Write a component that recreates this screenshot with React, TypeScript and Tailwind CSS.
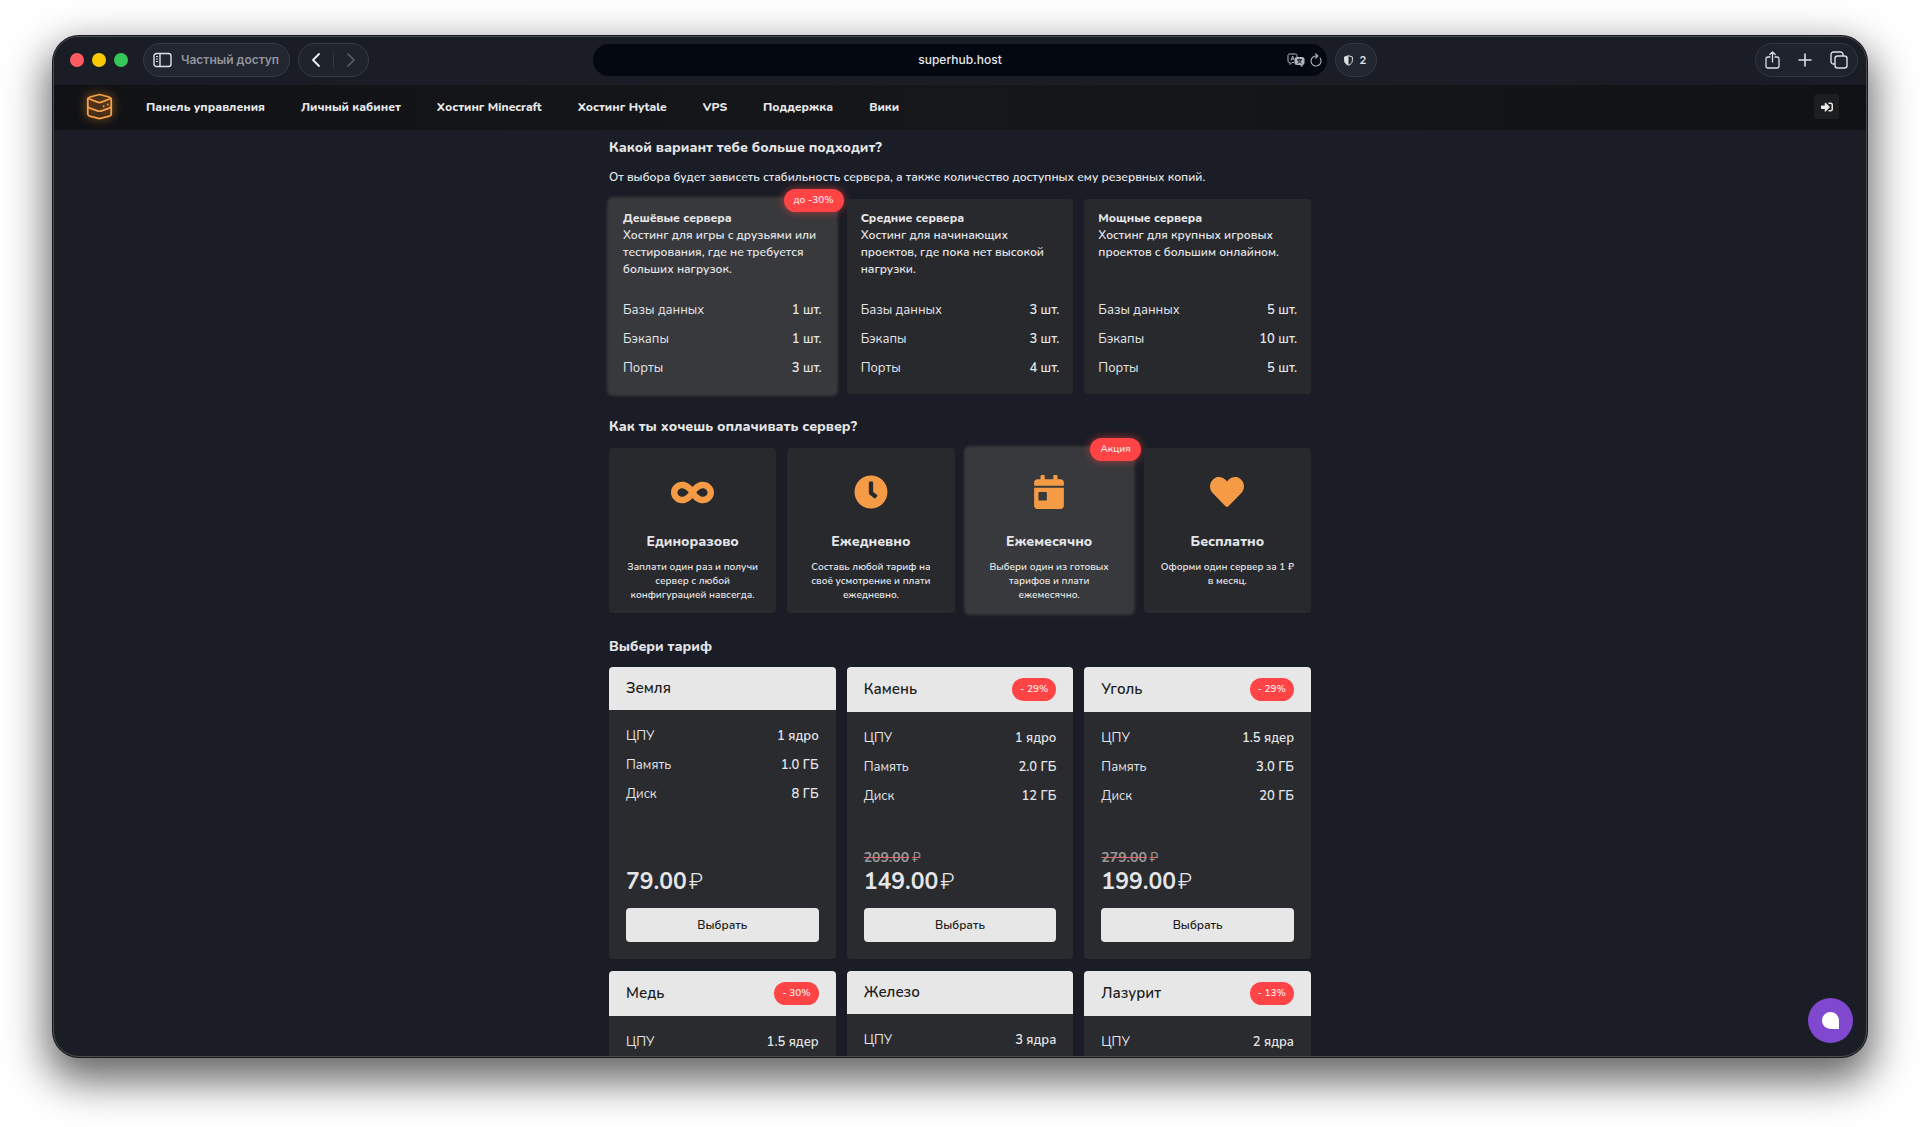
import { FaCalendarDay, FaClock, FaHeart, FaInfinity, FaSignInAlt } from 'react-icons/fa'
import type { IconType } from 'react-icons'

type Spec = [string, string]

const links = ['Панель управления', 'Личный кабинет', 'Хостинг Minecraft', 'Хостинг Hytale', 'VPS', 'Поддержка', 'Вики']

const tiers: { title: string; text: string; specs: Spec[]; badge?: string; active?: boolean }[] = [
  {
    title: 'Дешёвые сервера',
    text: 'Хостинг для игры с друзьями или тестирования, где не требуется больших нагрузок.',
    specs: [['Базы данных', '1 шт.'], ['Бэкапы', '1 шт.'], ['Порты', '3 шт.']],
    badge: 'до -30%',
    active: true,
  },
  {
    title: 'Средние сервера',
    text: 'Хостинг для начинающих проектов, где пока нет высокой нагрузки.',
    specs: [['Базы данных', '3 шт.'], ['Бэкапы', '3 шт.'], ['Порты', '4 шт.']],
  },
  {
    title: 'Мощные сервера',
    text: 'Хостинг для крупных игровых проектов с большим онлайном.',
    specs: [['Базы данных', '5 шт.'], ['Бэкапы', '10 шт.'], ['Порты', '5 шт.']],
  },
]

const payments: { title: string; text: string; icon: IconType; iconSize: string; badge?: string; active?: boolean }[] = [
  {
    title: 'Единоразово',
    text: 'Заплати один раз и получи сервер с любой конфигурацией навсегда.',
    icon: FaInfinity,
    iconSize: 'size-[43px]',
  },
  {
    title: 'Ежедневно',
    text: 'Составь любой тариф на своё усмотрение и плати ежедневно.',
    icon: FaClock,
    iconSize: 'size-[34px]',
  },
  {
    title: 'Ежемесячно',
    text: 'Выбери один из готовых тарифов и плати ежемесячно.',
    icon: FaCalendarDay,
    iconSize: 'size-[34px]',
    badge: 'Акция',
    active: true,
  },
  {
    title: 'Бесплатно',
    text: 'Оформи один сервер за 1 ₽ в месяц.',
    icon: FaHeart,
    iconSize: 'size-[34px]',
  },
]

const plans: { name: string; specs: Spec[]; price?: string; oldPrice?: string; discount?: string }[] = [
  { name: 'Земля', specs: [['ЦПУ', '1 ядро'], ['Память', '1.0 ГБ'], ['Диск', '8 ГБ']], price: '79.00' },
  { name: 'Камень', specs: [['ЦПУ', '1 ядро'], ['Память', '2.0 ГБ'], ['Диск', '12 ГБ']], price: '149.00', oldPrice: '209.00', discount: '- 29%' },
  { name: 'Уголь', specs: [['ЦПУ', '1.5 ядер'], ['Память', '3.0 ГБ'], ['Диск', '20 ГБ']], price: '199.00', oldPrice: '279.00', discount: '- 29%' },
  { name: 'Медь', specs: [['ЦПУ', '1.5 ядер']], discount: '- 30%' },
  { name: 'Железо', specs: [['ЦПУ', '3 ядра']] },
  { name: 'Лазурит', specs: [['ЦПУ', '2 ядра']], discount: '- 13%' },
]

function Toolbar() {
  return (
    <div className="flex h-12 shrink-0 items-center justify-between bg-[#1a1d26] pr-2 pb-[2px] pl-4 font-['Inter',sans-serif]">
      <div className="flex flex-1 items-center">
        <div className="flex gap-2">
          <button aria-label="Закрыть" className="size-[14px] rounded-full bg-[#ff5a61]" />
          <button aria-label="Свернуть" className="size-[14px] rounded-full bg-[#f8c905]" />
          <button aria-label="Развернуть" className="size-[14px] rounded-full bg-[#35c759]" />
        </div>
        <button className="ml-[15px] flex h-[34px] items-center gap-[9px] rounded-full border border-[#383c46] bg-[#222630] pr-[10px] pl-[9px] text-[12px] font-semibold whitespace-nowrap text-[#92949b]">
          <svg className="h-4 w-[19px]" viewBox="0 0 19 16" fill="none" stroke="#dfe1e6" strokeWidth="1.4">
            <rect x="1" y="1.5" width="17" height="13" rx="2.5" />
            <path d="M7 1.5v13" />
            <path d="M3 4.5h2M3 7h2M3 9.5h2" strokeWidth="1" />
          </svg>
          Частный доступ
        </button>
        <div className="ml-2 flex h-[34px] items-center rounded-full border border-[#383c46] bg-[#1f232c] px-3">
          <button aria-label="Назад" className="text-[#f0f1f4]">
            <svg className="h-4 w-[10px]" viewBox="0 0 10 16" fill="none" stroke="currentColor" strokeWidth="1.8" strokeLinecap="round" strokeLinejoin="round">
              <path d="M8 2L2 8l6 6" />
            </svg>
          </button>
          <span className="mx-3 h-[15px] w-px bg-[#343842]" />
          <button aria-label="Вперёд" className="text-[#5a5e68]">
            <svg className="h-4 w-[10px]" viewBox="0 0 10 16" fill="none" stroke="currentColor" strokeWidth="1.6" strokeLinecap="round" strokeLinejoin="round">
              <path d="M2 2l6 6-6 6" />
            </svg>
          </button>
        </div>
      </div>

      {/* Address bar */}
      <div className="mr-1 flex h-8 w-[734px] items-center rounded-full bg-[#040911] pr-[5px] pl-10">
        <input
          aria-label="Адрес"
          defaultValue="superhub.host"
          className="min-w-0 flex-1 bg-transparent text-center text-[12px] font-medium text-[#e6e8ec] outline-none"
        />
        <div className="flex items-center gap-[5px] text-[#b4b7bd]">
          <button aria-label="Перевести">
            <svg className="h-[14px] w-[18px]" viewBox="0 0 18 14" fill="none" stroke="currentColor" strokeWidth="1">
              <path d="M7 9.5H5l-2 2v-2h-.5A1.5 1.5 0 0 1 1 8V2.500A1.5 1.5 0 0 1 2.500 1h6A1.5 1.5 0 0 1 10 2.500V4" />
              <path d="M4 7.500l1.600-4.500 1.500 4M4.500 6h2" />
              <path d="M9.500 4.500h6A1.5 1.5 0 0 1 17 6v4a1.5 1.5 0 0 1-1.5 1.5H15v2l-2-2H9.500A1.5 1.5 0 0 1 8 10V6a1.5 1.5 0 0 1 1.500-1.500z" fill="currentColor" />
              <path d="M10 6.800h5M12.500 5.800v1M14 7c-.5 1.500-2 2.700-3.500 3.200M11 7c.5 1.500 2 2.700 3.500 3.200" stroke="#040911" />
            </svg>
          </button>
          <button aria-label="Обновить">
            <svg className="h-[14px] w-3" viewBox="0 0 12 14" fill="none" stroke="currentColor" strokeWidth="1.1" strokeLinecap="round" strokeLinejoin="round">
              <path d="M10.200 5.200A5 5 0 1 1 6 3h1.500M5.500 .8L7.800 3 5.500 5.200" />
            </svg>
          </button>
        </div>
      </div>

      <div className="flex flex-1 items-center justify-between pl-1">
        <button className="flex h-[34px] items-center gap-[5px] rounded-full border border-[#333741] bg-[#222630] px-2 text-[11px] font-semibold text-[#dfe1e6]">
          <svg className="h-[11px] w-[9px]" viewBox="0 0 10 12">
            <path d="M5 .7L9.300 2v4.200c0 2.400-1.900 4-4.300 5.100C2.600 10.200.7 8.600.7 6.200V2z" fill="none" stroke="#dfe1e6" strokeWidth="1.1" />
            <path d="M5 .7v10.600C2.600 10.200.7 8.600.7 6.200V2z" fill="#dfe1e6" />
          </svg>
          <span className="w-[10px] text-center">2</span>
        </button>
        <div className="flex h-[34px] items-center gap-4 rounded-full border border-[#333741] bg-[#1f232d] px-[9px] text-[#dcdee3]">
          <button aria-label="Поделиться">
            <svg className="h-[18px] w-[15px]" viewBox="0 0 15 18" fill="none" stroke="currentColor" strokeWidth="1.3" strokeLinecap="round" strokeLinejoin="round">
              <path d="M5 6H3a2 2 0 0 0-2 2v7a2 2 0 0 0 2 2h9a2 2 0 0 0 2-2V8a2 2 0 0 0-2-2h-2M7.500 11V1M4.800 3.500L7.500 1l2.700 2.500" />
            </svg>
          </button>
          <button aria-label="Новая вкладка">
            <svg className="size-[18px]" viewBox="0 0 18 18" fill="none" stroke="currentColor" strokeWidth="1.6" strokeLinecap="round">
              <path d="M9 3v12M3 9h12" />
            </svg>
          </button>
          <button aria-label="Все вкладки">
            <svg className="size-[18px]" viewBox="0 0 18 18" fill="none" stroke="currentColor" strokeWidth="1.4" strokeLinejoin="round">
              <rect x="5" y="5" width="12" height="12" rx="2.5" />
              <path d="M5 13H3.500A2.500 2.500 0 0 1 1 10.500v-7A2.500 2.500 0 0 1 3.500 1h7A2.500 2.500 0 0 1 13 3.500V5" />
            </svg>
          </button>
        </div>
      </div>
    </div>
  )
}

function SiteHeader() {
  return (
    <header className="flex h-[45px] shrink-0 items-center bg-linear-to-r from-[#111215] via-[#161719] to-[#111215] pr-[27px] pb-[2px] pl-8">
      <a href="#" aria-label="SuperHub" className="text-[#f5a04c] drop-shadow-[0_0_5px_#f08a24]">
        <svg className="size-[27px]" viewBox="0 0 27 27" fill="none" stroke="currentColor" strokeWidth="1.8" strokeLinejoin="round" strokeLinecap="round">
          <path d="M13.500 1.500L4 4c-1.600.5-2.200 1-2.200 2v15c0 1 .6 1.700 1.800 2.100l9.900 2.600 9.900-2.600c1.200-.4 1.800-1.100 1.800-2.100V6c0-1-.6-1.500-2.200-2z" />
          <path d="M2.300 5.500l9.200 3.600c1.300.5 2.700.5 4 0l9.200-3.600" />
          <path d="M1.800 13.500c.3.800 1 1.200 2 1.600l7.700 2.700c1.300.5 2.700.5 4 0l7.700-2.700c1-.4 1.700-.8 2-1.600" />
          <path d="M17.700 13.100v.2M21.800 11.400v.2" />
        </svg>
      </a>
      <nav className="ml-[33px]">
        <ul className="flex items-center gap-9">
          {links.map((link) => (
            <li key={link}>
              <a href="#" className="block text-[12px] leading-[22px] font-extrabold whitespace-nowrap text-[#e6e7e9]">
                {link}
              </a>
            </li>
          ))}
        </ul>
      </nav>
      <button aria-label="Войти" className="ml-auto flex size-[25px] items-center justify-center rounded bg-[#1d1e20] text-[#e8e8e8]">
        <FaSignInAlt className="size-3" />
      </button>
    </header>
  )
}

function Specs({ specs }: { specs: Spec[] }) {
  return (
    <table className="w-full text-[13px] leading-[29px]">
      <tbody>
        {specs.map(([label, value]) => (
          <tr key={label}>
            <th scope="row" className="p-0 text-left font-normal">{label}</th>
            <td className="p-0 text-right font-semibold">{value}</td>
          </tr>
        ))}
      </tbody>
    </table>
  )
}

function CornerBadge({ text }: { text: string }) {
  return (
    <span className="absolute -top-[10px] -right-2 rounded-full bg-[#ff4446] px-[10px] text-[10px] leading-[23px] font-semibold text-[#f3e4e4] shadow-[0_0_8px_#ff444699]">
      {text}
    </span>
  )
}

export default function App() {
  return (
    <div className="h-screen bg-white px-[53px] pt-9 pb-[70px]">
      <div className="relative flex h-full flex-col overflow-hidden rounded-[26px] border border-[#4b4d50] bg-[#1a1d25] font-['Nunito','Noto_Sans',sans-serif] text-[#e4e5e8] shadow-[0_0_0_1px_#15171a,0_18px_42px_6px_rgba(0,0,0,0.6)]">
        <Toolbar />
        <SiteHeader />

        <main className="min-h-0 flex-1 overflow-hidden">
          <div className="mx-auto w-[702px] pt-[7px]">
            <h2 className="text-[14px] leading-[22px] font-extrabold">Какой вариант тебе больше подходит?</h2>
            <p className="mt-[7px] text-[12px] leading-[22px] font-semibold">
              От выбора будет зависеть стабильность сервера, а также количество доступных ему резервных копий.
            </p>
            <div className="mt-[11px] grid grid-cols-3 gap-[11px]">
              {tiers.map((tier) => (
                <div
                  key={tier.title}
                  className={`relative flex h-[195px] flex-col rounded px-[14px] pt-[11px] ${
                    tier.active ? 'bg-[#38393c] shadow-[0_0_3px_2px_#38393c]' : 'bg-[#28292d]'
                  }`}
                >
                  <h3 className="text-[12px] leading-[17px] font-extrabold">{tier.title}</h3>
                  <p className="h-[51px] text-[12px] leading-[17px] font-semibold">{tier.text}</p>
                  <div className="mt-[18px]">
                    <Specs specs={tier.specs} />
                  </div>
                  {tier.badge && <CornerBadge text={tier.badge} />}
                </div>
              ))}
            </div>

            <h2 className="mt-[22px] text-[14px] leading-[22px] font-extrabold">Как ты хочешь оплачивать сервер?</h2>
            <div className="mt-[10px] grid grid-cols-4 gap-[11px]">
              {payments.map(({ title, text, icon: Icon, iconSize, badge, active }) => (
                <button
                  key={title}
                  className={`relative flex h-[165px] flex-col items-center rounded px-4 pt-[27px] ${
                    active ? 'bg-[#38393c] shadow-[0_0_3px_2px_#38393c]' : 'bg-[#28292d]'
                  }`}
                >
                  <span className="flex h-[34px] items-center text-[#f59a45]">
                    <Icon className={iconSize} />
                  </span>
                  <span className="mt-[22px] text-[14px] leading-[22px] font-extrabold">{title}</span>
                  <span className="mt-[7px] text-[10px] leading-[14px] font-semibold">{text}</span>
                  {badge && <CornerBadge text={badge} />}
                </button>
              ))}
            </div>

            <h2 className="mt-[23px] text-[14px] leading-[22px] font-extrabold">Выбери тариф</h2>
            <div className="mt-[9px] grid grid-cols-3 gap-x-[11px] gap-y-3">
              {plans.map((plan) => (
                <article key={plan.name} className="flex h-[292px] flex-col overflow-hidden rounded bg-[#2a2b2e]">
                  <div className="flex items-center justify-between bg-[#e7e7e7] px-[17px] py-[11px]">
                    <h3 className="text-[15px] leading-[21px] font-semibold text-[#1c1d20]">{plan.name}</h3>
                    {plan.discount && (
                      <span className="rounded-full bg-[#ff4446] px-2 text-[10px] leading-[23px] font-semibold text-[#f8e8e8]">
                        {plan.discount}
                      </span>
                    )}
                  </div>
                  <div className="flex flex-1 flex-col px-[17px] pt-3 pb-[17px]">
                    <Specs specs={plan.specs} />
                    {plan.price && (
                      <>
                        <div className="mt-auto">
                          {plan.oldPrice && (
                            <s className="block text-[14px] leading-5 font-bold text-[#97989b] decoration-[#e2686a]">
                              {plan.oldPrice}
                              <span className="pl-[3px] font-normal">₽</span>
                            </s>
                          )}
                          <p className="text-[23px] leading-7 font-bold">
                            {plan.price}
                            <span className="ml-[2px] font-light">₽</span>
                          </p>
                        </div>
                        <button className="mt-3 h-[34px] shrink-0 rounded bg-[#e7e7e7] text-[12px] font-semibold text-[#1c1d20]">
                          Выбрать
                        </button>
                      </>
                    )}
                  </div>
                </article>
              ))}
            </div>
          </div>
        </main>

        {/* Chat widget */}
        <button
          aria-label="Чат"
          className="absolute right-[13px] bottom-[13px] flex size-[45px] items-center justify-center rounded-full bg-[#8047cf]"
        >
          <span className="size-[17px] rounded-full rounded-br-none bg-white" />
        </button>
      </div>
    </div>
  )
}
